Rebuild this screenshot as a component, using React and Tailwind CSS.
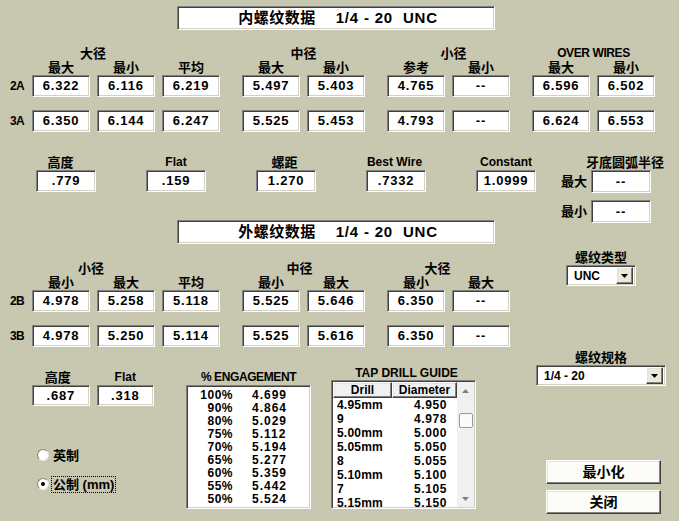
const FONT = "font-['Liberation_Sans','Noto_Sans_CJK_SC',sans-serif]";
const SUNKEN =
  "border border-t-[#808080] border-l-[#808080] border-b-white border-r-white shadow-[inset_1px_1px_0_#404040,inset_-1px_-1px_0_#d4d0c8]";
const RAISED =
  "border border-t-white border-l-white border-b-[#404040] border-r-[#404040] shadow-[inset_-1px_-1px_0_#808080,inset_1px_1px_0_#e3e3e3]";

const innerGroups = [
  {
    h: "大径",
    hc: "pr-[66px] text-[13px]",
    cols: [
      ["最大", "6.322", "6.350"],
      ["最小", "6.116", "6.144"],
      ["平均", "6.219", "6.247"],
    ],
  },
  {
    h: "中径",
    hc: "text-[13px]",
    cols: [
      ["最大", "5.497", "5.525"],
      ["最小", "5.403", "5.453"],
    ],
  },
  {
    h: "小径",
    hc: "pl-[10px] text-[13px]",
    cols: [
      ["参考", "4.765", "4.793"],
      ["最小", "--", "--"],
    ],
  },
  {
    h: "OVER WIRES",
    hc: "text-[12px] tracking-[-0.4px]",
    cols: [
      ["最大", "6.596", "6.624"],
      ["最小", "6.502", "6.553"],
    ],
  },
];

const outerGroups = [
  {
    h: "小径",
    hc: "pr-[70px] text-[13px]",
    cols: [
      ["最小", "4.978", "4.978"],
      ["最大", "5.258", "5.250"],
      ["平均", "5.118", "5.114"],
    ],
  },
  {
    h: "中径",
    hc: "pr-[8px] text-[13px]",
    cols: [
      ["最小", "5.525", "5.525"],
      ["最大", "5.646", "5.616"],
    ],
  },
  {
    h: "大径",
    hc: "pr-[22px] text-[13px]",
    cols: [
      ["最小", "6.350", "6.350"],
      ["最大", "--", "--"],
    ],
  },
];

const misc = [
  ["高度", ".779", "text-[13px] pr-[11px]"],
  ["Flat", ".159", "text-[12px]"],
  ["螺距", "1.270", "text-[13px] pr-[3px]"],
  ["Best Wire", ".7332", "text-[12px] pr-[3px]"],
  ["Constant", "1.0999", "text-[12px]"],
];

const engagement = [
  ["100%", "4.699"],
  ["90%", "4.864"],
  ["80%", "5.029"],
  ["75%", "5.112"],
  ["70%", "5.194"],
  ["65%", "5.277"],
  ["60%", "5.359"],
  ["55%", "5.442"],
  ["50%", "5.524"],
];

const drills = [
  ["4.95mm", "4.950"],
  ["9", "4.978"],
  ["5.00mm", "5.000"],
  ["5.05mm", "5.050"],
  ["8", "5.055"],
  ["5.10mm", "5.100"],
  ["7", "5.105"],
  ["5.15mm", "5.150"],
];

const Box = ({ v, w = "w-[58px]", h = "h-[22px]" }) => (
  <div
    className={`${SUNKEN} ${w} ${h} bg-white flex items-center justify-center text-[13px] tracking-[0.8px]`}
  >
    {v}
  </div>
);

const TitleBox = ({ title }) => (
  <div
    className={`${SUNKEN} w-[318px] h-[24px] bg-white flex items-center justify-center`}
  >
    <span className="text-[15px] tracking-[0.5px] pl-[4px]">{title}</span>
    <span className="text-[15px] tracking-[0.8px] ml-[20px] whitespace-pre">
      1/4 - 20  UNC
    </span>
  </div>
);

const Group = ({ g }) => (
  <div className="flex flex-col">
    <div className={`h-[15px] leading-[15px] text-center ${g.hc}`}>{g.h}</div>
    <div className="flex gap-[7px]">
      {g.cols.map((c, i) => (
        <div
          key={i}
          className="w-[58px] h-[14px] leading-[14px] text-center text-[13px]"
        >
          {c[0]}
        </div>
      ))}
    </div>
    <div className="flex gap-[7px]">
      {g.cols.map((c, i) => (
        <Box key={i} v={c[1]} />
      ))}
    </div>
    <div className="flex gap-[7px] mt-[13px]">
      {g.cols.map((c, i) => (
        <Box key={i} v={c[2]} />
      ))}
    </div>
  </div>
);

const Table = ({ groups, rows }) => (
  <div className="flex">
    <div className="w-[32px] flex flex-col pt-[29px]">
      <div className="h-[22px] flex items-center pl-[10px] text-[12px] tracking-[-0.6px]">
        {rows[0]}
      </div>
      <div className="h-[22px] mt-[13px] flex items-center pl-[10px] text-[12px] tracking-[-0.6px]">
        {rows[1]}
      </div>
    </div>
    <div className="flex gap-[22px]">
      {groups.map((g, i) => (
        <Group key={i} g={g} />
      ))}
    </div>
  </div>
);

const Arrow = ({ up, color = "#000", w = 7 }) => (
  <svg width={w} height="4" viewBox="0 0 7 4">
    {up ? (
      <path d="M0 4 L3.5 0 L7 4 Z" fill={color} />
    ) : (
      <path d="M0 0 L7 0 L3.5 4 Z" fill={color} />
    )}
  </svg>
);

const Combo = ({ value, w }) => (
  <div className={`${SUNKEN} ${w} h-[21px] bg-white flex items-center p-[2px]`}>
    <span className="flex-1 pl-[5px] text-[12px]">{value}</span>
    <div className={`${RAISED} w-[17px] h-[17px] bg-[#ece9d8] flex items-center justify-center`}>
      <Arrow />
    </div>
  </div>
);

const Radio = ({ checked, children, focus }) => (
  <div className="flex items-center h-[16px] pl-[5px]">
    <div className="w-[12px] h-[12px] rounded-full bg-white border border-t-[#808080] border-l-[#808080] border-b-[#e8e8e8] border-r-[#e8e8e8] flex items-center justify-center">
      {checked && <div className="w-[4px] h-[4px] rounded-full bg-black" />}
    </div>
    <span
      className={`ml-[3px] px-[1px] text-[13px] leading-[15px] ${
        focus ? "outline outline-1 outline-dotted outline-black" : ""
      }`}
    >
      {children}
    </span>
  </div>
);

export default function App() {
  return (
    <div
      className={`w-[679px] h-[521px] bg-[#c8c7af] overflow-hidden font-bold text-black ${FONT}`}
    >
      <div className="pt-[6px] pl-[177px]">
        <div className="h-[23px]">
          <TitleBox title="内螺纹数据" />
        </div>
      </div>
      <div className="mt-[17px]">
        <Table groups={innerGroups} rows={["2A", "3A"]} />
      </div>

      <div className="flex">
        {/* left area */}
        <div className="w-[536px] flex flex-col">
          <div className="flex gap-[50px] pl-[36px] mt-[23px]">
            {misc.map(([l, v, c]) => (
              <div key={l} className="w-[60px] flex flex-col">
                <div className={`h-[15px] leading-[15px] text-center ${c}`}>{l}</div>
                <Box v={v} w="w-[60px]" />
              </div>
            ))}
          </div>
          <div className="pl-[177px] mt-[28px]">
            <TitleBox title="外螺纹数据" />
          </div>
          <div className="mt-[17px]">
            <Table groups={outerGroups} rows={["2B", "3B"]} />
          </div>

          <div className="flex items-start">
            <div className="ml-[32px] w-[122px] mt-[23px] flex flex-col">
              <div className="flex gap-[7px]">
                <div className="w-[58px] h-[15px] leading-[15px] text-center text-[13px] pr-[6px]">
                  高度
                </div>
                <div className="w-[58px] h-[15px] leading-[15px] text-center text-[12px]">
                  Flat
                </div>
              </div>
              <div className="flex gap-[7px]">
                <Box v=".687" h="h-[21px]" />
                <Box v=".318" h="h-[21px]" />
              </div>
              <div className="mt-[41px]">
                <Radio>英制</Radio>
              </div>
              <div className="mt-[13px]">
                <Radio checked focus>
                  公制 (mm)
                </Radio>
              </div>
            </div>

            <div className="ml-[32px] w-[125px] mt-[23px] flex flex-col">
              <div className="h-[15px] leading-[15px] text-center text-[12px] tracking-[-0.4px]">
                % ENGAGEMENT
              </div>
              <div className={`${SUNKEN} h-[124px] bg-white p-[1px] pt-[3px]`}>
                {engagement.map(([p, v]) => (
                  <div key={p} className="flex h-[13px] leading-[13px] text-[12px]">
                    <span className="w-[45px] text-right tracking-[0.5px]">{p}</span>
                    <span className="pl-[19px] tracking-[1px]">{v}</span>
                  </div>
                ))}
              </div>
            </div>

            <div className="ml-[20px] w-[145px] mt-[20px] flex flex-col">
              <div className="h-[13px] leading-[13px] text-center text-[12px] pl-[6px]">
                TAP DRILL GUIDE
              </div>
              <div className={`${SUNKEN} h-[129px] bg-white p-[1px] flex`}>
                <div className="flex-1 flex flex-col">
                  <div className="flex h-[16px]">
                    <div className={`${RAISED} w-[59px] bg-[#f0f0f0] flex items-center justify-center text-[12px]`}>
                      Drill
                    </div>
                    <div className={`${RAISED} w-[65px] bg-[#f0f0f0] flex items-center justify-center text-[12px]`}>
                      Diameter
                    </div>
                  </div>
                  {drills.map(([d, v], i) => (
                    <div key={i} className="flex h-[14px] leading-[14px] text-[12px]">
                      <span className="w-[60px] pl-[4px] tracking-[0.2px]">{d}</span>
                      <span className="w-[54px] text-right tracking-[0.6px]">{v}</span>
                    </div>
                  ))}
                </div>
                <div className="w-[17px] bg-[#f0f0f0] flex flex-col items-center">
                  <div className="h-[17px] flex items-center justify-center">
                    <Arrow up color="#808080" />
                  </div>
                  <div className="mt-[14px] w-[14px] h-[15px] bg-[#fafafa] border border-[#9a9a9a] rounded-[2px]" />
                  <div className="mt-auto h-[17px] flex items-center justify-center">
                    <Arrow color="#808080" />
                  </div>
                </div>
              </div>
            </div>
          </div>
        </div>

        {/* right column */}
        <div className="w-[143px] flex flex-col">
          <div className="mt-[23px] pl-[50px] h-[15px] leading-[15px] text-[13px]">
            牙底圆弧半径
          </div>
          <div className="flex items-center pl-[25px]">
            <span className="text-[13px] w-[30px]">最大</span>
            <Box v="--" w="w-[60px]" h="h-[23px]" />
          </div>
          <div className="flex items-center pl-[25px] mt-[7px]">
            <span className="text-[13px] w-[30px]">最小</span>
            <Box v="--" w="w-[60px]" h="h-[23px]" />
          </div>
          <div className="mt-[27px] pl-[39px] h-[15px] leading-[15px] text-[13px]">
            螺纹类型
          </div>
          <div className="pl-[30px]">
            <Combo value="UNC" w="w-[70px]" />
          </div>
          <div className="mt-[64px] pl-[39px] h-[15px] leading-[15px] text-[13px]">
            螺纹规格
          </div>
          <div>
            <Combo value="1/4 - 20" w="w-[130px]" />
          </div>
          <div className="mt-[74px] pl-[10px] flex flex-col gap-[6px]">
            <button className={`${RAISED} w-[115px] h-[24px] bg-[#fbfbf8] text-[14px]`}>
              最小化
            </button>
            <button className={`${RAISED} w-[115px] h-[24px] bg-[#fbfbf8] text-[14px]`}>
              关闭
            </button>
          </div>
        </div>
      </div>
    </div>
  );
}
